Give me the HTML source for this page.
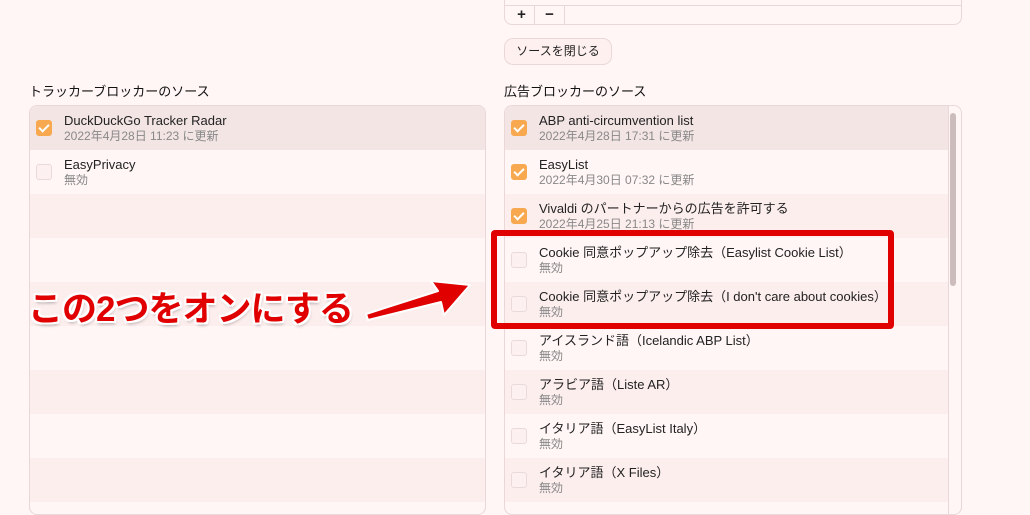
<!DOCTYPE html>
<html><head><meta charset="utf-8"><style>
*{box-sizing:border-box;margin:0;padding:0}
body{width:1030px;height:498px;overflow:hidden;background:#fff6f5;font-family:"Liberation Sans","Noto Sans CJK JP",sans-serif;color:#222;position:relative}
.abs{position:absolute}
.panel{position:absolute;border:1px solid #ead8d8;border-radius:8px;overflow:hidden;background:#fff6f5}
.row{height:44px;position:relative}
.row.s{background:#fdeeee}
.row.h{background:#f4e5e5}
.cb{position:absolute;left:6px;top:14px;width:16px;height:16px;border-radius:3px;border:1px solid #eadada;background:#fdf0f0}
.cb.on{background:#f8a94f;border-color:#f8a94f}
.cb.on:after{content:"";position:absolute;left:4px;top:1px;width:4px;height:8px;border:solid #fff;border-width:0 2px 2px 0;transform:rotate(45deg)}
.t{position:absolute;left:34px;top:7px;font-size:13px;line-height:16px;height:16px;color:#222;white-space:nowrap}
.st{position:absolute;left:34px;top:23px;font-size:12px;line-height:15px;height:15px;color:#888;white-space:nowrap}
h3{position:absolute;font-size:13px;line-height:16px;font-weight:normal;color:#111}
</style></head><body>
<div class="panel" style="left:504px;top:-10px;width:458px;height:35px">
 <div class="abs" style="left:0;top:14px;width:458px;border-top:1px solid #ead8d8"></div>
 <div class="abs" style="left:4px;top:15px;width:26px;height:20px;font-size:15px;font-weight:bold;text-align:center;line-height:18px;border-right:1px solid #ead8d8">+</div>
 <div class="abs" style="left:30px;top:15px;width:30px;height:20px;font-size:15px;font-weight:bold;text-align:center;line-height:18px;border-right:1px solid #ead8d8">−</div>
</div>
<div class="abs" style="left:504px;top:38px;width:108px;height:27px;border:1px solid #ead8d8;border-radius:9px;background:#fdf0ef;font-size:12px;text-align:center;line-height:25px">ソースを閉じる</div>
<h3 style="left:29px;top:84px">トラッカーブロッカーのソース</h3>
<h3 style="left:504px;top:84px">広告ブロッカーのソース</h3>
<div class="panel" style="left:29px;top:105px;width:457px;height:410px">
 <div class="row h"><div class="cb on"></div><div class="t">DuckDuckGo Tracker Radar</div><div class="st">2022年4月28日 11:23 に更新</div></div>
 <div class="row"><div class="cb"></div><div class="t">EasyPrivacy</div><div class="st">無効</div></div>
 <div class="row s"></div><div class="row"></div><div class="row s"></div><div class="row"></div><div class="row s"></div><div class="row"></div><div class="row s"></div>
</div>
<div class="panel" style="left:504px;top:105px;width:458px;height:410px">
 <div style="width:443px">
 <div class="row h"><div class="cb on"></div><div class="t">ABP anti-circumvention list</div><div class="st">2022年4月28日 17:31 に更新</div></div>
 <div class="row"><div class="cb on"></div><div class="t">EasyList</div><div class="st">2022年4月30日 07:32 に更新</div></div>
 <div class="row s"><div class="cb on"></div><div class="t">Vivaldi のパートナーからの広告を許可する</div><div class="st">2022年4月25日 21:13 に更新</div></div>
 <div class="row"><div class="cb"></div><div class="t">Cookie 同意ポップアップ除去（Easylist Cookie List）</div><div class="st">無効</div></div>
 <div class="row s"><div class="cb"></div><div class="t">Cookie 同意ポップアップ除去（I don't care about cookies）</div><div class="st">無効</div></div>
 <div class="row"><div class="cb"></div><div class="t">アイスランド語（Icelandic ABP List）</div><div class="st">無効</div></div>
 <div class="row s"><div class="cb"></div><div class="t">アラビア語（Liste AR）</div><div class="st">無効</div></div>
 <div class="row"><div class="cb"></div><div class="t">イタリア語（EasyList Italy）</div><div class="st">無効</div></div>
 <div class="row s"><div class="cb"></div><div class="t">イタリア語（X Files）</div><div class="st">無効</div></div>
 </div>
 <div class="abs" style="left:443px;top:0;width:1px;height:410px;background:#ead8d8"></div>
 <div class="abs" style="left:445px;top:7px;width:6px;height:173px;border-radius:3px;background:#cdbcbc"></div>
</div>
<div class="abs" style="left:491px;top:230px;width:403px;height:99px;border:6px solid #e00000;border-radius:4px"></div>
<svg class="abs" style="left:0;top:0" width="1030" height="498">
 <path d="M366 314 L438 291 L431 281 L470 285 L444 315 L441 302 L368 320 Z" fill="#e00000" stroke="#fff" stroke-width="2" stroke-linejoin="round"/>
</svg>
<div class="abs" style="left:28px;top:288px;font-size:35px;line-height:44px;font-weight:bold;color:#e00000;white-space:nowrap;letter-spacing:-1px;text-shadow:2px 0 #fff,-2px 0 #fff,0 2px #fff,0 -2px #fff,2px 2px #fff,-2px -2px #fff,2px -2px #fff,-2px 2px #fff,1px 3px 3px rgba(0,0,0,.3)">この2つをオンにする</div>
</body></html>
